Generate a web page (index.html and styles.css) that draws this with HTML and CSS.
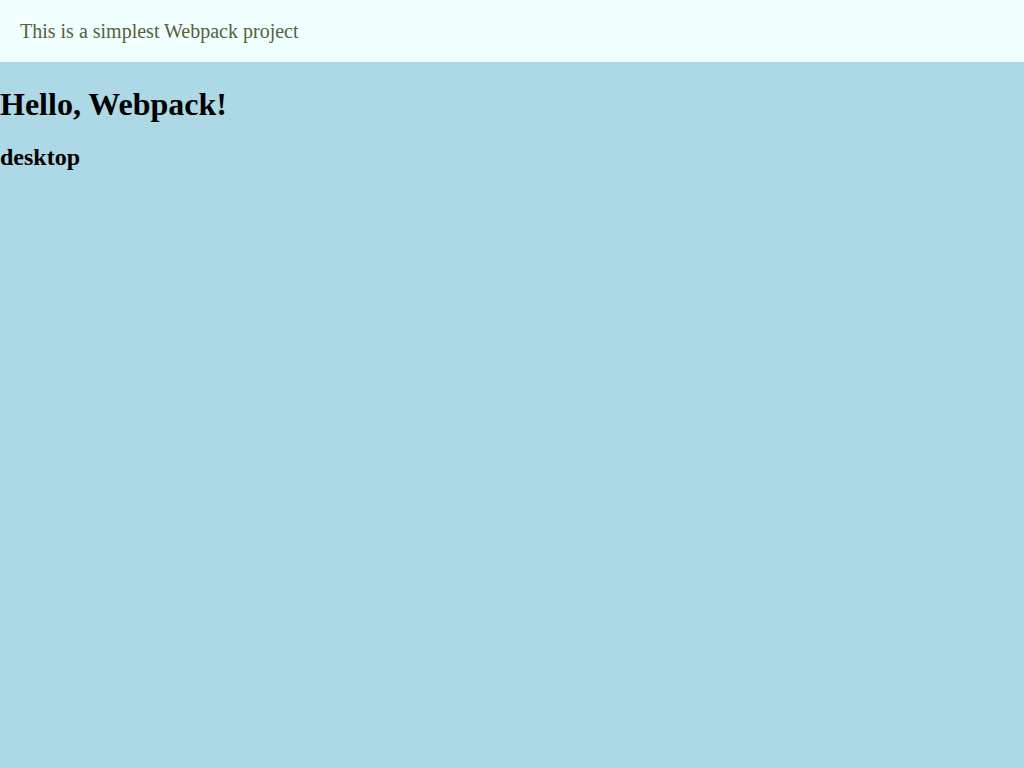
FILE: index.html
```html
<!DOCTYPE html>
<html lang="en">
<head>
<meta charset="utf-8">
<title>Webpack</title>
<link rel="stylesheet" href="styles.css">
</head>
<body>
<header class="topbar">This is a simplest Webpack project</header>
<main class="content">
<h1 class="title">Hello, Webpack!</h1>
<h2 class="device">desktop</h2>
</main>
</body>
</html>
```
FILE: styles.css
```css
html, body {
  margin: 0;
  padding: 0;
}
body {
  background: #add8e6;
  font-family: "Liberation Serif", "Times New Roman", serif;
  color: #000;
  min-height: 100vh;
}
.topbar {
  background: #f0ffff;
  color: #585f3a;
  font-size: 20px;
  line-height: 22px;
  padding: 20px;
}
.content {
  display: block;
}
.title {
  font-size: 32px;
  font-weight: bold;
  margin: 24px 0 21px;
}
.device {
  font-size: 24px;
  font-weight: bold;
  margin: 20px 0;
}
```
